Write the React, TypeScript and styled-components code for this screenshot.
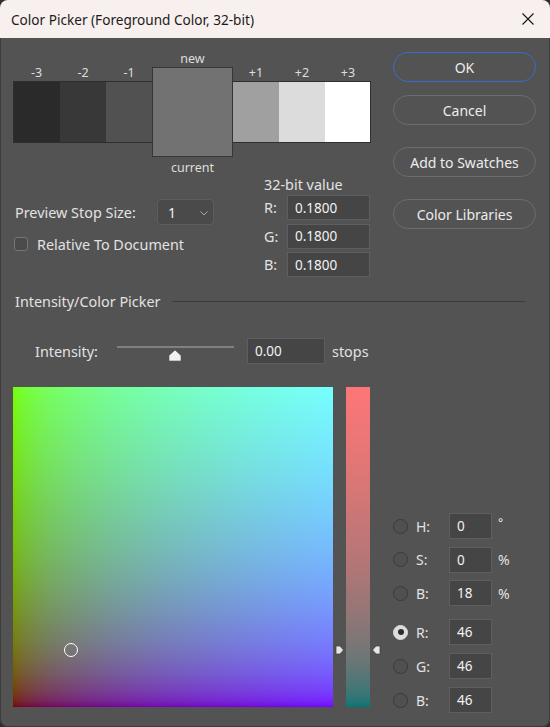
import React from 'react';
import styled, { createGlobalStyle } from 'styled-components';

const FONT = `"Noto Sans", "Open Sans", sans-serif`;

const Global = createGlobalStyle`
  html, body { margin: 0; padding: 0; background: #2e2e2e; }
  body { font-family: ${FONT}; }
  * { box-sizing: border-box; }
`;

// sRGB encoding of linear value t (0..1) -> 0..255
const enc = (t: number) => {
  const v = t <= 0.0031308 ? 12.92 * t : 1.055 * Math.pow(t, 1 / 2.4) - 0.055;
  return Math.round(Math.max(0, Math.min(1, v)) * 255);
};
const STOPS = [0, 0.005, 0.01, 0.02, 0.035, 0.05, 0.075, 0.1, 0.15, 0.2, 0.3, 0.4, 0.5, 0.6, 0.7, 0.8, 0.9, 1];
const BASE = enc(0.18);

// G channel: top = 1, bottom = 0
const gGrad = `linear-gradient(to top, ${STOPS.map((t) => `rgb(0, ${enc(t)}, 0) ${(t * 100).toFixed(2)}%`).join(', ')})`;
// B channel: left = 0, right = 1, R fixed
const bGrad = `linear-gradient(to right, ${STOPS.map((t) => `rgb(${BASE}, 0, ${enc(t)}) ${(t * 100).toFixed(2)}%`).join(', ')})`;
// Channel bar: R from 1 (top) to 0 (bottom), G/B fixed
const rGrad = `linear-gradient(to top, ${STOPS.map((t) => `rgb(${enc(t)}, ${BASE}, ${BASE}) ${(t * 100).toFixed(2)}%`).join(', ')})`;

const Window = styled.div`
  width: 550px;
  height: 727px;
  background: #535353;
  border-radius: 8px;
  overflow: hidden;
  box-shadow: inset 1px 0 0 #3d3d3d, inset -1px 0 0 #3d3d3d, inset 0 -1px 0 #3d3d3d;
  display: flex;
  flex-direction: column;
  color: #e2e2e2;
  font-size: 14.4px;
`;

const TitleBar = styled.div`
  height: 38px;
  flex: none;
  background: #f8f0ee;
  display: flex;
  align-items: center;
  justify-content: space-between;
  padding: 0 16px 0 11px;
`;

const TitleText = styled.span`
  font-size: 13.6px;
  color: #1b1b1b;
`;

const CloseIcon = styled.svg`
  width: 12px;
  height: 12px;
  display: block;
`;

const TopSection = styled.div`
  display: grid;
  grid-template-columns: 380px 143px;
  column-gap: 13px;
`;

const LeftColumn = styled.div`
  display: flex;
  flex-direction: column;
`;

const SwatchGrid = styled.div`
  display: grid;
  grid-template-columns: 47px 46px 46px 81px 46px 46px 46px;
  grid-template-rows: 17px 14px 62px 14px 20px;
  margin: 12px 0 0 13px;
`;

const SwatchLabel = styled.div<{ $col: number; $row: number }>`
  grid-column: ${(p) => p.$col};
  grid-row: ${(p) => p.$row};
  text-align: center;
  font-size: 12.5px;
  line-height: ${(p) => (p.$row === 2 ? '12px' : p.$row === 5 ? '21px' : '17px')};
  color: #dedede;
`;

const SideSwatch = styled.div<{ $col: number; $color: string; $first?: boolean; $last?: boolean }>`
  grid-column: ${(p) => p.$col};
  grid-row: 3;
  background: ${(p) => p.$color};
  border-top: 1px solid #2f2f2f;
  border-bottom: 1px solid #2f2f2f;
  border-left: ${(p) => (p.$first ? '1px solid #2f2f2f' : 'none')};
  border-right: ${(p) => (p.$last ? '1px solid #2f2f2f' : 'none')};
`;

const CenterSwatch = styled.div`
  grid-column: 4;
  grid-row: 2 / span 3;
  background: #727272;
  border: 1px solid #363636;
`;

const ControlsRow = styled.div`
  display: flex;
  margin-top: -1px;
`;

const LeftControls = styled.div`
  width: 264px;
  padding-top: 23px;
  display: flex;
  flex-direction: column;
`;

const StopRow = styled.div`
  display: flex;
  align-items: center;
  height: 26px;
`;

const StopLabel = styled.span`
  width: 157px;
  padding-left: 15px;
`;

const Dropdown = styled.div`
  width: 57px;
  height: 26px;
  background: #4a4a4a;
  border: 1px solid #5d5d5d;
  border-radius: 4px;
  display: flex;
  align-items: center;
  justify-content: space-between;
  padding: 0 5px 0 10px;
  color: #f0f0f0;
  font-size: 14px;
`;

const Chevron = styled.svg`
  width: 8px;
  height: 5px;
  display: block;
  margin-top: 2px;
`;

const CheckRow = styled.div`
  display: flex;
  align-items: center;
  gap: 9px;
  height: 16px;
  margin-top: 11px;
  padding-left: 14px;
`;

const CheckBox = styled.span`
  width: 14px;
  height: 14px;
  border: 1px solid #767676;
  background: #4b4b4b;
  border-radius: 3px;
  display: block;
`;

const ValueColumn = styled.div`
  display: flex;
  flex-direction: column;
`;

const ValueTitle = styled.div`
  line-height: 18px;
  margin-bottom: 1px;
`;

const ValueGrid = styled.div`
  display: grid;
  grid-template-columns: 23px 83px;
  grid-auto-rows: 25px;
  row-gap: 3.5px;
  align-items: center;
`;

const AxisLabel = styled.span``;

const NumBox = styled.div<{ $w?: number; $h?: number }>`
  width: ${(p) => p.$w ?? 83}px;
  height: ${(p) => p.$h ?? 25}px;
  background: #454545;
  border: 1px solid #5e5e5e;
  display: flex;
  align-items: center;
  padding-left: 7px;
  font-size: 13.5px;
  color: #f2f2f2;
`;

const ButtonColumn = styled.div`
  display: flex;
  flex-direction: column;
  padding-top: 14px;
`;

const PillButton = styled.div<{ $primary?: boolean; $gap: number }>`
  height: 30px;
  margin-top: ${(p) => p.$gap}px;
  border-radius: 15px;
  border: 1px solid ${(p) => (p.$primary ? '#3b6bd0' : '#6c6c6c')};
  display: flex;
  align-items: center;
  justify-content: center;
  font-size: 14px;
  color: #ececec;
`;

const SectionHeader = styled.div`
  display: flex;
  align-items: center;
  height: 18px;
  margin-top: 15px;
  padding: 0 25px 0 15px;
`;

const SectionLine = styled.div`
  flex: 1;
  height: 1px;
  margin-left: 12px;
  background: #3c3c3c;
`;

const IntensityRow = styled.div`
  display: flex;
  align-items: center;
  height: 26px;
  margin-top: 28px;
  padding-left: 35px;
`;

const IntensityLabel = styled.span`
  width: 82px;
  padding-top: 1px;
`;

const SliderTrack = styled.div`
  position: relative;
  width: 117px;
  height: 26px;
`;

const TrackLine = styled.div`
  margin-top: 8px;
  height: 2px;
  background: #808080;
`;

const Thumb = styled.svg`
  position: absolute;
  left: 51px;
  top: 11px;
  width: 14px;
  height: 13px;
`;

const StopsText = styled.span`
  margin-left: 7px;
`;

const BottomSection = styled.div`
  display: flex;
  align-items: flex-start;
  margin-top: 23px;
  padding-left: 13px;
`;

const ColorField = styled.div`
  position: relative;
  width: 320px;
  height: 320px;
  flex: none;
  background: ${gGrad}, ${bGrad};
  background-blend-mode: screen;
`;

const FieldCursor = styled.span`
  position: absolute;
  left: 51px;
  top: 256px;
  width: 14px;
  height: 14px;
  border-radius: 50%;
  border: 1px solid #ffffff;
`;

const ChannelBar = styled.div`
  position: relative;
  width: 24px;
  height: 320px;
  flex: none;
  margin-left: 13px;
  background: ${rGrad};
`;

const BarArrow = styled.svg<{ $side: 'left' | 'right' }>`
  position: absolute;
  top: 258px;
  ${(p) => (p.$side === 'left' ? 'left: -11px;' : 'right: -11px;')}
  width: 9px;
  height: 10px;
`;

const ModelPanel = styled.div`
  margin-left: 23px;
  margin-top: 126px;
  display: flex;
  flex-direction: column;
  gap: 13px;
`;

const ModelGroup = styled.div<{ $gap: number }>`
  display: grid;
  grid-template-columns: 23px 33px 43px auto;
  grid-auto-rows: 26px;
  row-gap: ${(p) => p.$gap}px;
  align-items: center;
  font-size: 14px;
`;

const Radio = styled.span<{ $checked?: boolean }>`
  width: 15px;
  height: 15px;
  border-radius: 50%;
  display: flex;
  align-items: center;
  justify-content: center;
  background: ${(p) => (p.$checked ? '#dcdcdc' : '#505050')};
  border: 1px solid ${(p) => (p.$checked ? '#dcdcdc' : '#3a3a3a')};
  &::after {
    content: '';
    width: 6px;
    height: 6px;
    border-radius: 50%;
    background: #2c2c2c;
    display: ${(p) => (p.$checked ? 'block' : 'none')};
  }
`;

const Unit = styled.span<{ $raised?: boolean }>`
  padding-left: 6px;
  font-size: ${(p) => (p.$raised ? '12px' : '14px')};
  align-self: ${(p) => (p.$raised ? 'start' : 'center')};
  margin-top: ${(p) => (p.$raised ? '1px' : '0')};
`;

const swatches = [
  { label: '-3', color: '#2a2a2a' },
  { label: '-2', color: '#383838' },
  { label: '-1', color: '#515151' },
  null,
  { label: '+1', color: '#a0a0a0' },
  { label: '+2', color: '#dcdcdc' },
  { label: '+3', color: '#ffffff' },
];

const hsb = [
  { k: 'H:', v: '0', u: '°', raised: true },
  { k: 'S:', v: '0', u: '%' },
  { k: 'B:', v: '18', u: '%' },
];
const rgb = [
  { k: 'R:', v: '46', checked: true },
  { k: 'G:', v: '46' },
  { k: 'B:', v: '46' },
];

export default function App() {
  return (
    <>
      <Global />
      <Window>
        <TitleBar>
          <TitleText>Color Picker (Foreground Color, 32-bit)</TitleText>
          <CloseIcon viewBox="0 0 12 12">
            <path d="M0.5 0.5 L11.5 11.5 M11.5 0.5 L0.5 11.5" stroke="#151515" strokeWidth="1.1" fill="none" />
          </CloseIcon>
        </TitleBar>

        <TopSection>
          <LeftColumn>
            <SwatchGrid>
              <SwatchLabel $col={4} $row={1}>new</SwatchLabel>
              {swatches.map((s, i) =>
                s ? (
                  <React.Fragment key={s.label}>
                    <SwatchLabel $col={i + 1} $row={2}>{s.label}</SwatchLabel>
                    <SideSwatch $col={i + 1} $color={s.color} $first={i === 0} $last={i === 6} />
                  </React.Fragment>
                ) : (
                  <CenterSwatch key="center" />
                )
              )}
              <SwatchLabel $col={4} $row={5}>current</SwatchLabel>
            </SwatchGrid>

            <ControlsRow>
              <LeftControls>
                <StopRow>
                  <StopLabel>Preview Stop Size:</StopLabel>
                  <Dropdown>
                    <span>1</span>
                    <Chevron viewBox="0 0 8 5">
                      <path d="M0.5 0.5 L4 4 L7.5 0.5" stroke="#a8a8a8" strokeWidth="1" fill="none" />
                    </Chevron>
                  </Dropdown>
                </StopRow>
                <CheckRow>
                  <CheckBox />
                  <span>Relative To Document</span>
                </CheckRow>
              </LeftControls>
              <ValueColumn>
                <ValueTitle>32-bit value</ValueTitle>
                <ValueGrid>
                  {['R:', 'G:', 'B:'].map((c) => (
                    <React.Fragment key={c}>
                      <AxisLabel>{c}</AxisLabel>
                      <NumBox>0.1800</NumBox>
                    </React.Fragment>
                  ))}
                </ValueGrid>
              </ValueColumn>
            </ControlsRow>
          </LeftColumn>

          <ButtonColumn>
            <PillButton $primary $gap={0}>OK</PillButton>
            <PillButton $gap={13}>Cancel</PillButton>
            <PillButton $gap={22}>Add to Swatches</PillButton>
            <PillButton $gap={22}>Color Libraries</PillButton>
          </ButtonColumn>
        </TopSection>

        <SectionHeader>
          <span>Intensity/Color Picker</span>
          <SectionLine />
        </SectionHeader>

        <IntensityRow>
          <IntensityLabel>Intensity:</IntensityLabel>
          <SliderTrack>
            <TrackLine />
            <Thumb viewBox="0 0 14 13">
              <path d="M7 0.8 L13.2 6.5 L13.2 12.2 L0.8 12.2 L0.8 6.5 Z" fill="#f2f2f2" stroke="#3a3a3a" strokeWidth="0.8" />
            </Thumb>
          </SliderTrack>
          <NumBox $w={78} $h={26} style={{ marginLeft: 13 }}>0.00</NumBox>
          <StopsText>stops</StopsText>
        </IntensityRow>

        <BottomSection>
          <ColorField>
            <FieldCursor />
          </ColorField>
          <ChannelBar>
            <BarArrow $side="left" viewBox="0 0 9 10">
              <path d="M1 1 L5 1 L8.5 5 L5 9 L1 9 Z" fill="#e6e6e6" stroke="#3a3a3a" strokeWidth="0.7" />
            </BarArrow>
            <BarArrow $side="right" viewBox="0 0 9 10">
              <path d="M8 1 L4 1 L0.5 5 L4 9 L8 9 Z" fill="#e6e6e6" stroke="#3a3a3a" strokeWidth="0.7" />
            </BarArrow>
          </ChannelBar>
          <ModelPanel>
            <ModelGroup $gap={7.5}>
              {hsb.map((r) => (
                <React.Fragment key={r.k + r.u}>
                  <Radio />
                  <span>{r.k}</span>
                  <NumBox $w={43} $h={26}>{r.v}</NumBox>
                  <Unit $raised={r.raised}>{r.u}</Unit>
                </React.Fragment>
              ))}
            </ModelGroup>
            <ModelGroup $gap={8}>
              {rgb.map((r, i) => (
                <React.Fragment key={r.k + i}>
                  <Radio $checked={r.checked} />
                  <span>{r.k}</span>
                  <NumBox $w={43} $h={26}>{r.v}</NumBox>
                  <span />
                </React.Fragment>
              ))}
            </ModelGroup>
          </ModelPanel>
        </BottomSection>
      </Window>
    </>
  );
}
